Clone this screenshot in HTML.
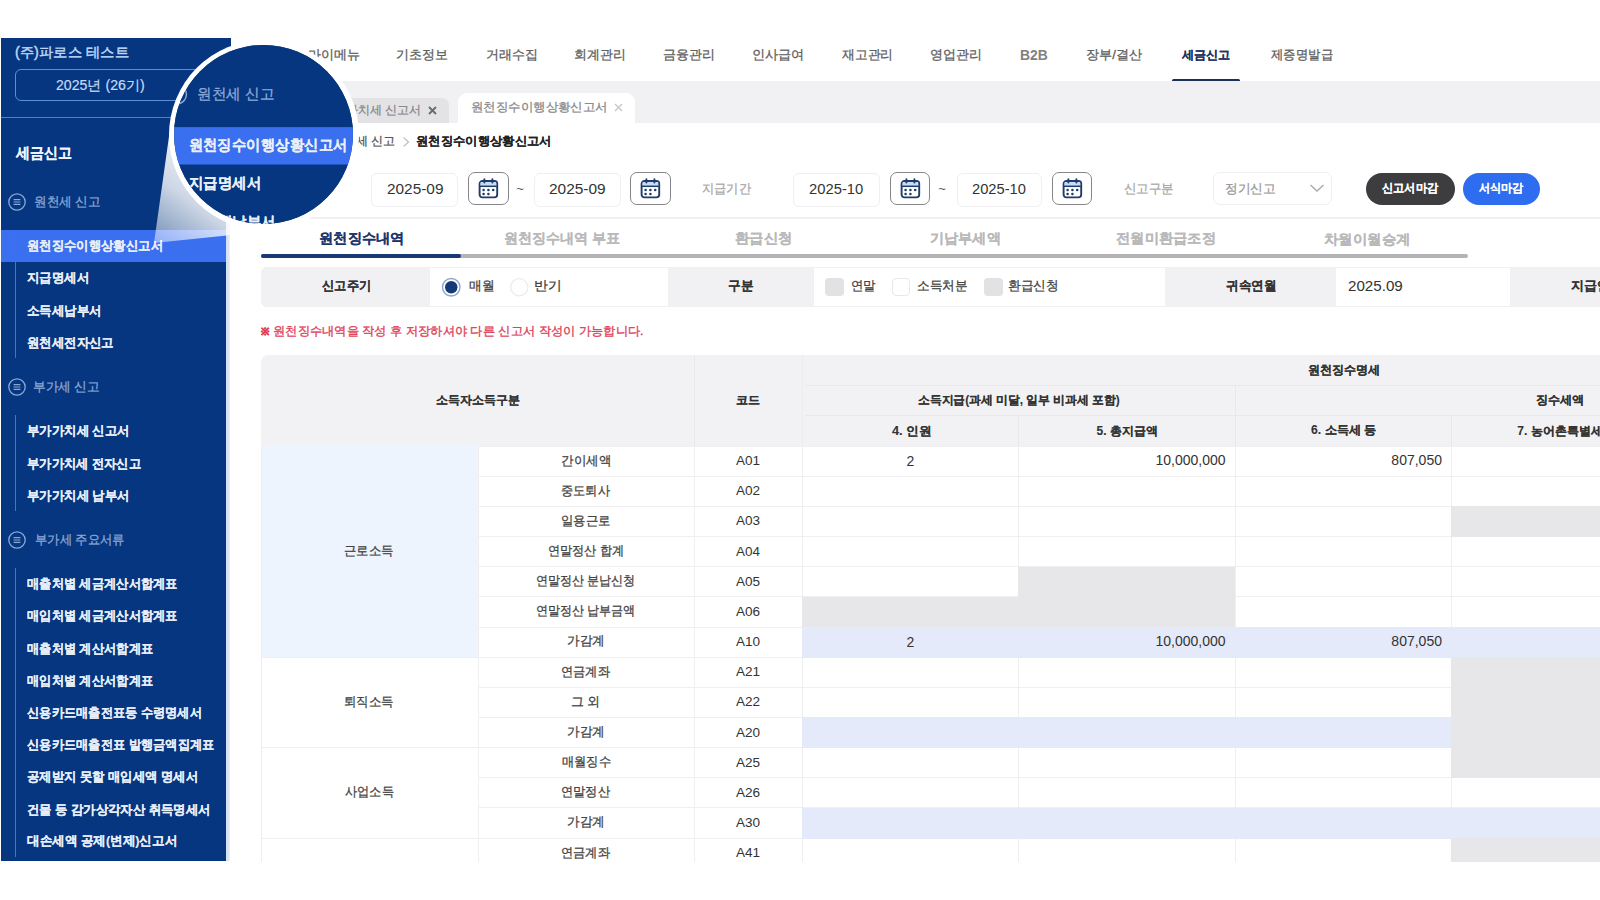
<!DOCTYPE html>
<html><head><meta charset="utf-8"><style>
html,body{margin:0;padding:0;}
body{width:1600px;height:900px;position:relative;overflow:hidden;background:#fff;font-family:"Liberation Sans",sans-serif;}
.t{position:absolute;white-space:nowrap;}
.r{position:absolute;}
</style></head><body>
<div class="t" style="left:307.72px;top:35.40px;font-size:13.000px;line-height:40px;color:#606060;-webkit-text-stroke-width:0.3px;">마이메뉴</div>
<div class="t" style="left:396.32px;top:35.26px;font-size:13.000px;line-height:40px;color:#606060;transform:scaleX(0.9966);transform-origin:0 0;-webkit-text-stroke-width:0.3px;">기초정보</div>
<div class="t" style="left:485.54px;top:35.26px;font-size:13.000px;line-height:40px;color:#606060;transform:scaleX(0.9972);transform-origin:0 0;-webkit-text-stroke-width:0.3px;">거래수집</div>
<div class="t" style="left:574.40px;top:35.39px;font-size:13.000px;line-height:40px;color:#606060;transform:scaleX(0.9920);transform-origin:0 0;-webkit-text-stroke-width:0.3px;">회계관리</div>
<div class="t" style="left:663.48px;top:35.27px;font-size:13.000px;line-height:40px;color:#606060;-webkit-text-stroke-width:0.3px;">금융관리</div>
<div class="t" style="left:752.05px;top:35.29px;font-size:13.000px;line-height:40px;color:#606060;transform:scaleX(1.0113);transform-origin:0 0;-webkit-text-stroke-width:0.3px;">인사급여</div>
<div class="t" style="left:841.88px;top:35.39px;font-size:13.000px;line-height:40px;color:#606060;transform:scaleX(0.9863);transform-origin:0 0;-webkit-text-stroke-width:0.3px;">재고관리</div>
<div class="t" style="left:930.08px;top:35.26px;font-size:13.000px;line-height:40px;color:#606060;-webkit-text-stroke-width:0.3px;">영업관리</div>
<div class="t" style="left:1019.72px;top:35.40px;font-size:14.000px;line-height:40px;color:#808080;font-weight:bold;transform:scaleX(0.9915);transform-origin:0 0;">B2B</div>
<div class="t" style="left:1085.99px;top:35.27px;font-size:13.000px;line-height:40px;color:#606060;transform:scaleX(1.0085);transform-origin:0 0;-webkit-text-stroke-width:0.3px;">장부/결산</div>
<div class="t" style="left:1182.36px;top:35.01px;font-size:12.000px;line-height:40px;color:#1b3160;font-weight:bold;transform:scaleX(1.0090);transform-origin:0 0;-webkit-text-stroke-width:0.1px;">세금신고</div>
<div class="t" style="left:1270.70px;top:35.27px;font-size:13.000px;line-height:40px;color:#606060;transform:scaleX(0.9526);transform-origin:0 0;-webkit-text-stroke-width:0.3px;">제증명발급</div>
<div class="r" style="left:1172.2px;top:79px;width:68px;height:3px;background:#1a2f5a;border-radius:2px;"></div>
<div class="r" style="left:230px;top:81.3px;width:1370px;height:41.5px;background:#f1f1f3;"></div>
<div class="r" style="left:300px;top:98px;width:148.5px;height:25px;background:#e3e3e6;border-radius:7px 7px 0 0;"></div>
<div class="t" style="left:321.75px;top:89.85px;font-size:12.000px;line-height:40px;color:#8a8a8a;-webkit-text-stroke-width:0.3px;">부가가치세 신고서</div>
<svg class="r" style="left:428px;top:106px" width="9" height="9" viewBox="0 0 9 9"><path d="M1 1l7 7M8 1l-7 7" stroke="#6a6a6a" stroke-width="1.8"/></svg>
<div class="r" style="left:457.5px;top:92.5px;width:177.5px;height:30.5px;background:#fff;border-radius:9px 9px 0 0;"></div>
<div class="t" style="left:471.06px;top:87.01px;font-size:12.000px;line-height:40px;color:#8a8a8a;transform:scaleX(1.0360);transform-origin:0 0;-webkit-text-stroke-width:0.3px;">원천징수이행상황신고서</div>
<svg class="r" style="left:614px;top:103px" width="9" height="9" viewBox="0 0 9 9"><path d="M1 1l7 7M8 1l-7 7" stroke="#c8c8c8" stroke-width="1.4"/></svg>
<div class="t" style="left:332.12px;top:121.03px;font-size:12.000px;line-height:40px;color:#555;-webkit-text-stroke-width:0.3px;">원천세 신고</div>
<svg class="r" style="left:401.5px;top:135.5px" width="8" height="12" viewBox="0 0 8 12"><path d="M1.5 1.5l5 4.5-5 4.5" fill="none" stroke="#bdbdbd" stroke-width="1.1"/></svg>
<div class="t" style="left:415.58px;top:120.93px;font-size:12.000px;line-height:40px;color:#222;font-weight:bold;transform:scaleX(1.0272);transform-origin:0 0;-webkit-text-stroke-width:0.1px;">원천징수이행상황신고서</div>
<div class="r" style="left:370.7px;top:172.5px;width:87px;height:34.5px;border:1px solid #efeff1;border-radius:6px;box-sizing:border-box"></div><div class="t" style="left:386.84px;top:168.70px;font-size:15.000px;line-height:40px;color:#333;transform:scaleX(1.0261);transform-origin:0 0;">2025-09</div>
<div class="r" style="left:468px;top:172px;width:40.5px;height:32.5px;border:1.2px solid #86868a;border-radius:7px;box-sizing:border-box;background:#fff"></div><svg class="r" style="left:478px;top:177.5px" width="21" height="21" viewBox="0 0 21 21"><rect x="1.6" y="3" width="17.6" height="16.4" rx="2.8" fill="#fff" stroke="#1f3c6b" stroke-width="1.9"/><rect x="2.6" y="4" width="15.6" height="4" fill="#c9dcf6"/><path d="M2 8.3h16.8" stroke="#1f3c6b" stroke-width="1.5"/><path d="M6.4 1.3v3.2M14.4 1.3v3.2" stroke="#1f3c6b" stroke-width="1.9" stroke-linecap="round"/><circle cx="5.6" cy="12" r="1.3" fill="#1f3c6b"/><circle cx="10.4" cy="12" r="1.3" fill="#1f3c6b"/><circle cx="15.2" cy="12" r="1.3" fill="#1f3c6b"/><circle cx="5.6" cy="16" r="1.3" fill="#1f3c6b"/><circle cx="10.4" cy="16" r="1.3" fill="#1f3c6b"/></svg>
<div class="t" style="left:516.17px;top:169.47px;font-size:13.000px;line-height:40px;color:#555;">~</div>
<div class="r" style="left:533.8px;top:172.5px;width:87px;height:34.5px;border:1px solid #efeff1;border-radius:6px;box-sizing:border-box"></div><div class="t" style="left:549.23px;top:168.70px;font-size:15.000px;line-height:40px;color:#333;transform:scaleX(1.0298);transform-origin:0 0;">2025-09 </div>
<div class="r" style="left:630.3px;top:172px;width:40.5px;height:32.5px;border:1.2px solid #86868a;border-radius:7px;box-sizing:border-box;background:#fff"></div><svg class="r" style="left:640.3px;top:177.5px" width="21" height="21" viewBox="0 0 21 21"><rect x="1.6" y="3" width="17.6" height="16.4" rx="2.8" fill="#fff" stroke="#1f3c6b" stroke-width="1.9"/><rect x="2.6" y="4" width="15.6" height="4" fill="#c9dcf6"/><path d="M2 8.3h16.8" stroke="#1f3c6b" stroke-width="1.5"/><path d="M6.4 1.3v3.2M14.4 1.3v3.2" stroke="#1f3c6b" stroke-width="1.9" stroke-linecap="round"/><circle cx="5.6" cy="12" r="1.3" fill="#1f3c6b"/><circle cx="10.4" cy="12" r="1.3" fill="#1f3c6b"/><circle cx="15.2" cy="12" r="1.3" fill="#1f3c6b"/><circle cx="5.6" cy="16" r="1.3" fill="#1f3c6b"/><circle cx="10.4" cy="16" r="1.3" fill="#1f3c6b"/></svg>
<div class="t" style="left:702.40px;top:168.89px;font-size:13.000px;line-height:40px;color:#a8a8a8;transform:scaleX(0.9407);transform-origin:0 0;-webkit-text-stroke-width:0.3px;">지급기간</div>
<div class="r" style="left:793px;top:172.5px;width:87px;height:34.5px;border:1px solid #efeff1;border-radius:6px;box-sizing:border-box"></div><div class="t" style="left:809.27px;top:168.70px;font-size:15.000px;line-height:40px;color:#333;transform:scaleX(0.9852);transform-origin:0 0;">2025-10</div>
<div class="r" style="left:889.6px;top:172px;width:40.5px;height:32.5px;border:1.2px solid #86868a;border-radius:7px;box-sizing:border-box;background:#fff"></div><svg class="r" style="left:899.6px;top:177.5px" width="21" height="21" viewBox="0 0 21 21"><rect x="1.6" y="3" width="17.6" height="16.4" rx="2.8" fill="#fff" stroke="#1f3c6b" stroke-width="1.9"/><rect x="2.6" y="4" width="15.6" height="4" fill="#c9dcf6"/><path d="M2 8.3h16.8" stroke="#1f3c6b" stroke-width="1.5"/><path d="M6.4 1.3v3.2M14.4 1.3v3.2" stroke="#1f3c6b" stroke-width="1.9" stroke-linecap="round"/><circle cx="5.6" cy="12" r="1.3" fill="#1f3c6b"/><circle cx="10.4" cy="12" r="1.3" fill="#1f3c6b"/><circle cx="15.2" cy="12" r="1.3" fill="#1f3c6b"/><circle cx="5.6" cy="16" r="1.3" fill="#1f3c6b"/><circle cx="10.4" cy="16" r="1.3" fill="#1f3c6b"/></svg>
<div class="t" style="left:938.17px;top:169.47px;font-size:13.000px;line-height:40px;color:#555;">~</div>
<div class="r" style="left:957px;top:172.5px;width:85px;height:34.5px;border:1px solid #efeff1;border-radius:6px;box-sizing:border-box"></div><div class="t" style="left:972.27px;top:168.70px;font-size:15.000px;line-height:40px;color:#333;transform:scaleX(0.9778);transform-origin:0 0;">2025-10 </div>
<div class="r" style="left:1051.6px;top:172px;width:40.5px;height:32.5px;border:1.2px solid #86868a;border-radius:7px;box-sizing:border-box;background:#fff"></div><svg class="r" style="left:1061.6px;top:177.5px" width="21" height="21" viewBox="0 0 21 21"><rect x="1.6" y="3" width="17.6" height="16.4" rx="2.8" fill="#fff" stroke="#1f3c6b" stroke-width="1.9"/><rect x="2.6" y="4" width="15.6" height="4" fill="#c9dcf6"/><path d="M2 8.3h16.8" stroke="#1f3c6b" stroke-width="1.5"/><path d="M6.4 1.3v3.2M14.4 1.3v3.2" stroke="#1f3c6b" stroke-width="1.9" stroke-linecap="round"/><circle cx="5.6" cy="12" r="1.3" fill="#1f3c6b"/><circle cx="10.4" cy="12" r="1.3" fill="#1f3c6b"/><circle cx="15.2" cy="12" r="1.3" fill="#1f3c6b"/><circle cx="5.6" cy="16" r="1.3" fill="#1f3c6b"/><circle cx="10.4" cy="16" r="1.3" fill="#1f3c6b"/></svg>
<div class="t" style="left:1123.60px;top:169.00px;font-size:13.000px;line-height:40px;color:#a8a8a8;transform:scaleX(0.9602);transform-origin:0 0;-webkit-text-stroke-width:0.3px;">신고구분</div>
<div class="r" style="left:1213px;top:172px;width:119px;height:32.5px;border:1px solid #efeff1;border-radius:7px;box-sizing:border-box"></div>
<div class="t" style="left:1224.64px;top:168.87px;font-size:13.000px;line-height:40px;color:#9a9a9a;transform:scaleX(0.9762);transform-origin:0 0;-webkit-text-stroke-width:0.3px;">정기신고</div>
<svg class="r" style="left:1309px;top:183px" width="16" height="10" viewBox="0 0 16 10"><path d="M1.5 2l6.5 6 6.5-6" fill="none" stroke="#aaa" stroke-width="1.3"/></svg>
<div class="r" style="left:1365.6px;top:172.5px;width:89px;height:32px;background:#3d3d40;border-radius:16px;"></div>
<div class="t" style="left:1382.21px;top:168.42px;font-size:12.000px;line-height:40px;color:#fff;font-weight:bold;transform:scaleX(0.9365);transform-origin:0 0;-webkit-text-stroke-width:0.1px;">신고서마감</div>
<div class="r" style="left:1462.8px;top:172.5px;width:77px;height:32px;background:#2e6cf0;border-radius:16px;"></div>
<div class="t" style="left:1479.10px;top:168.42px;font-size:12.000px;line-height:40px;color:#fff;font-weight:bold;transform:scaleX(0.9250);transform-origin:0 0;-webkit-text-stroke-width:0.1px;">서식마감</div>
<div class="r" style="left:230px;top:217.3px;width:1370px;height:1.3px;background:#efeff1;"></div>
<div class="t" style="left:318.66px;top:218.47px;font-size:14.000px;line-height:40px;color:#1b356a;font-weight:bold;transform:scaleX(1.0198);transform-origin:0 0;-webkit-text-stroke-width:0.1px;">원천징수내역</div>
<div class="t" style="left:503.68px;top:218.47px;font-size:14.000px;line-height:40px;color:#b9b9b9;font-weight:bold;transform:scaleX(1.0042);transform-origin:0 0;-webkit-text-stroke-width:0.1px;">원천징수내역 부표</div>
<div class="t" style="left:735.21px;top:218.49px;font-size:14.000px;line-height:40px;color:#b9b9b9;font-weight:bold;transform:scaleX(1.0273);transform-origin:0 0;-webkit-text-stroke-width:0.1px;">환급신청</div>
<div class="t" style="left:929.69px;top:218.43px;font-size:14.000px;line-height:40px;color:#b9b9b9;font-weight:bold;transform:scaleX(1.0108);transform-origin:0 0;-webkit-text-stroke-width:0.1px;">기납부세액</div>
<div class="t" style="left:1116.28px;top:218.49px;font-size:14.000px;line-height:40px;color:#b9b9b9;font-weight:bold;transform:scaleX(1.0199);transform-origin:0 0;-webkit-text-stroke-width:0.1px;">전월미환급조정</div>
<div class="t" style="left:1324.38px;top:218.52px;font-size:14.000px;line-height:40px;color:#b9b9b9;font-weight:bold;transform:scaleX(1.0330);transform-origin:0 0;-webkit-text-stroke-width:0.1px;">차월이월승계</div>
<div class="r" style="left:261px;top:254px;width:1207px;height:4px;background:#b3b3b5;border-radius:2px;"></div>
<div class="r" style="left:261px;top:254px;width:200px;height:4px;background:#173a74;border-radius:2px;"></div>
<div class="r" style="left:260.5px;top:266.5px;width:1340px;height:40px;border:1px solid #f0f0f2;border-radius:6px 0 0 6px;box-sizing:border-box;background:#fff"></div>
<div class="r" style="left:260.5px;top:266.5px;width:169.5px;height:40px;background:#f1f1f3;border-radius:6px 0 0 6px;"></div>
<div class="t" style="left:321.96px;top:266.30px;font-size:13.000px;line-height:40px;color:#333;font-weight:bold;transform:scaleX(0.9447);transform-origin:0 0;-webkit-text-stroke-width:0.1px;">신고주기</div>
<svg class="r" style="left:441px;top:276.5px" width="21" height="21" viewBox="0 0 21 21"><circle cx="10.25" cy="10.25" r="8.7" fill="#fff" stroke="#90a6c4" stroke-width="1.4"/><circle cx="10.25" cy="10.25" r="6.2" fill="#143a7a"/></svg>
<div class="t" style="left:468.75px;top:266.29px;font-size:13.000px;line-height:40px;color:#444;transform:scaleX(0.9796);transform-origin:0 0;-webkit-text-stroke-width:0.3px;">매월</div>
<svg class="r" style="left:508.5px;top:276.5px" width="21" height="21" viewBox="0 0 21 21"><circle cx="10.25" cy="10.25" r="8.6" fill="#fff" stroke="#ececee" stroke-width="1.3"/></svg>
<div class="t" style="left:534.27px;top:266.29px;font-size:13.000px;line-height:40px;color:#444;transform:scaleX(1.0646);transform-origin:0 0;-webkit-text-stroke-width:0.3px;">반기</div>
<div class="r" style="left:668.3px;top:266.5px;width:146.2px;height:40px;background:#f1f1f3;"></div>
<div class="t" style="left:727.89px;top:266.17px;font-size:13.000px;line-height:40px;color:#333;font-weight:bold;transform:scaleX(0.9743);transform-origin:0 0;-webkit-text-stroke-width:0.1px;">구분</div>
<div class="r" style="left:825px;top:277.5px;width:19px;height:18.5px;background:#e2e2e5;border-radius:4px;"></div>
<div class="t" style="left:850.68px;top:266.29px;font-size:13.000px;line-height:40px;color:#444;transform:scaleX(0.9518);transform-origin:0 0;-webkit-text-stroke-width:0.3px;">연말</div>
<div class="r" style="left:891.8px;top:277.5px;width:18.5px;height:18.5px;border:1px solid #e8e8ea;border-radius:4px;box-sizing:border-box"></div>
<div class="t" style="left:917.07px;top:266.22px;font-size:13.000px;line-height:40px;color:#444;transform:scaleX(0.9727);transform-origin:0 0;-webkit-text-stroke-width:0.3px;">소득처분</div>
<div class="r" style="left:984px;top:277.5px;width:18.5px;height:18.5px;background:#e2e2e5;border-radius:4px;"></div>
<div class="t" style="left:1008.31px;top:266.30px;font-size:13.000px;line-height:40px;color:#444;transform:scaleX(0.9741);transform-origin:0 0;-webkit-text-stroke-width:0.3px;">환급신청</div>
<div class="r" style="left:1165px;top:266.5px;width:171px;height:40px;background:#f1f1f3;"></div>
<div class="t" style="left:1225.99px;top:266.16px;font-size:13.000px;line-height:40px;color:#333;font-weight:bold;transform:scaleX(0.9694);transform-origin:0 0;-webkit-text-stroke-width:0.1px;">귀속연월</div>
<div class="t" style="left:1347.63px;top:266.30px;font-size:14.000px;line-height:40px;color:#333;transform:scaleX(1.0829);transform-origin:0 0;">2025.09</div>
<div class="r" style="left:1510px;top:266.5px;width:90px;height:40px;background:#f1f1f3;"></div>
<div class="t" style="left:1571.19px;top:266.15px;font-size:13.000px;line-height:40px;color:#333;font-weight:bold;-webkit-text-stroke-width:0.1px;">지급연월</div>
<div class="t" style="left:261.41px;top:312.26px;font-size:10.000px;line-height:40px;color:#df3f56;font-weight:bold;-webkit-text-stroke-width:0.6px;">※</div>
<div class="t" style="left:272.98px;top:311.31px;font-size:12.000px;line-height:40px;color:#e0425a;transform:scaleX(1.0215);transform-origin:0 0;-webkit-text-stroke-width:0.35px;">원천징수내역을 작성 후 저장하셔야 다른 신고서 작성이 가능합니다.</div>
<div class="r" style="left:0;top:0;width:1600px;height:862px;overflow:hidden"><div class="r" style="left:261px;top:355px;width:1339px;height:90.60000000000002px;background:#f2f2f4;border-radius:7px 0 0 0;"></div>
<div class="r" style="left:694.3px;top:355px;width:1px;height:90.60000000000002px;background:#e8e8ec;"></div>
<div class="r" style="left:802px;top:355px;width:1px;height:90.60000000000002px;background:#ececf0;"></div>
<div class="r" style="left:806px;top:385.3px;width:794px;height:1px;background:#e8e8ec;"></div>
<div class="r" style="left:806px;top:415px;width:794px;height:1px;background:#e8e8ec;"></div>
<div class="r" style="left:1018.3px;top:415px;width:1px;height:30.6px;background:#e8e8ec;"></div>
<div class="r" style="left:1235px;top:385.3px;width:1px;height:60.3px;background:#e8e8ec;"></div>
<div class="r" style="left:1451.4px;top:415px;width:1px;height:30.6px;background:#e8e8ec;"></div>
<div class="t" style="left:435.66px;top:380.26px;font-size:12.000px;line-height:40px;color:#333;font-weight:bold;transform:scaleX(0.9979);transform-origin:0 0;-webkit-text-stroke-width:0.1px;">소득자소득구분</div>
<div class="t" style="left:736.25px;top:380.21px;font-size:12.000px;line-height:40px;color:#333;font-weight:bold;-webkit-text-stroke-width:0.1px;">코드</div>
<div class="t" style="left:1308.09px;top:349.93px;font-size:12.000px;line-height:40px;color:#333;font-weight:bold;transform:scaleX(1.0074);transform-origin:0 0;-webkit-text-stroke-width:0.1px;">원천징수명세</div>
<div class="t" style="left:917.77px;top:379.79px;font-size:12.000px;line-height:40px;color:#333;font-weight:bold;transform:scaleX(0.9852);transform-origin:0 0;-webkit-text-stroke-width:0.1px;">소득지급(과세 미달, 일부 비과세 포함)</div>
<div class="t" style="left:1535.92px;top:380.19px;font-size:12.000px;line-height:40px;color:#333;font-weight:bold;transform:scaleX(1.0107);transform-origin:0 0;-webkit-text-stroke-width:0.1px;">징수세액</div>
<div class="t" style="left:891.72px;top:410.60px;font-size:12.000px;line-height:40px;color:#333;font-weight:bold;transform:scaleX(1.0574);transform-origin:0 0;-webkit-text-stroke-width:0.1px;">4. 인원</div>
<div class="t" style="left:1096.48px;top:410.53px;font-size:12.000px;line-height:40px;color:#333;font-weight:bold;-webkit-text-stroke-width:0.1px;">5. 총지급액</div>
<div class="t" style="left:1310.50px;top:410.49px;font-size:12.000px;line-height:40px;color:#333;font-weight:bold;transform:scaleX(1.0137);transform-origin:0 0;-webkit-text-stroke-width:0.1px;">6. 소득세 등</div>
<div class="t" style="left:1517.26px;top:410.53px;font-size:12.000px;line-height:40px;color:#333;font-weight:bold;-webkit-text-stroke-width:0.1px;">7. 농어촌특별세</div>
<div class="r" style="left:478px;top:475.75px;width:1122px;height:1px;background:#efeff2;"></div>
<div class="r" style="left:478px;top:505.90000000000003px;width:1122px;height:1px;background:#efeff2;"></div>
<div class="r" style="left:478px;top:536.05px;width:1122px;height:1px;background:#efeff2;"></div>
<div class="r" style="left:478px;top:566.2px;width:1122px;height:1px;background:#efeff2;"></div>
<div class="r" style="left:478px;top:596.35px;width:1122px;height:1px;background:#efeff2;"></div>
<div class="r" style="left:478px;top:626.5px;width:1122px;height:1px;background:#efeff2;"></div>
<div class="r" style="left:261px;top:656.65px;width:1339px;height:1px;background:#efeff2;"></div>
<div class="r" style="left:478px;top:686.8px;width:1122px;height:1px;background:#efeff2;"></div>
<div class="r" style="left:478px;top:716.95px;width:1122px;height:1px;background:#efeff2;"></div>
<div class="r" style="left:261px;top:747.1px;width:1339px;height:1px;background:#efeff2;"></div>
<div class="r" style="left:478px;top:777.25px;width:1122px;height:1px;background:#efeff2;"></div>
<div class="r" style="left:478px;top:807.4px;width:1122px;height:1px;background:#efeff2;"></div>
<div class="r" style="left:261px;top:837.55px;width:1339px;height:1px;background:#efeff2;"></div>
<div class="r" style="left:261px;top:445.6px;width:1339px;height:1px;background:#efeff2;"></div>
<div class="r" style="left:478px;top:445.6px;width:1px;height:416.4px;background:#efeff2;"></div>
<div class="r" style="left:694.3px;top:445.6px;width:1px;height:416.4px;background:#efeff2;"></div>
<div class="r" style="left:802px;top:445.6px;width:1px;height:416.4px;background:#efeff2;"></div>
<div class="r" style="left:1018.3px;top:445.6px;width:1px;height:416.4px;background:#efeff2;"></div>
<div class="r" style="left:1235px;top:445.6px;width:1px;height:416.4px;background:#efeff2;"></div>
<div class="r" style="left:1451.4px;top:445.6px;width:1px;height:416.4px;background:#efeff2;"></div>
<div class="r" style="left:1668px;top:445.6px;width:1px;height:416.4px;background:#efeff2;"></div>
<div class="r" style="left:261px;top:445.6px;width:1px;height:416.4px;background:#efeff2;"></div>
<div class="r" style="left:261.5px;top:446.1px;width:216.5px;height:211.04999999999998px;background:#edf4fd;"></div>
<div class="t" style="left:560.83px;top:440.60px;font-size:13.000px;line-height:40px;color:#444;transform:scaleX(0.9633);transform-origin:0 0;-webkit-text-stroke-width:0.3px;">간이세액</div>
<div class="t" style="left:735.96px;top:441.17px;font-size:13.000px;line-height:40px;color:#333;transform:scaleX(1.0431);transform-origin:0 0;">A01</div>
<div class="t" style="left:560.82px;top:470.69px;font-size:13.000px;line-height:40px;color:#444;transform:scaleX(0.9385);transform-origin:0 0;-webkit-text-stroke-width:0.3px;">중도퇴사</div>
<div class="t" style="left:735.96px;top:471.32px;font-size:13.000px;line-height:40px;color:#333;transform:scaleX(1.0440);transform-origin:0 0;">A02</div>
<div class="r" style="left:1451.4px;top:506.40000000000003px;width:217.0999999999999px;height:30.65px;background:#e7e7ea;"></div>
<div class="t" style="left:561.01px;top:500.85px;font-size:13.000px;line-height:40px;color:#444;transform:scaleX(0.9552);transform-origin:0 0;-webkit-text-stroke-width:0.3px;">일용근로</div>
<div class="t" style="left:735.96px;top:501.47px;font-size:13.000px;line-height:40px;color:#333;transform:scaleX(1.0433);transform-origin:0 0;">A03</div>
<div class="t" style="left:547.51px;top:531.00px;font-size:13.000px;line-height:40px;color:#444;transform:scaleX(0.9324);transform-origin:0 0;-webkit-text-stroke-width:0.3px;">연말정산 합계</div>
<div class="t" style="left:735.96px;top:531.67px;font-size:13.000px;line-height:40px;color:#333;transform:scaleX(1.0349);transform-origin:0 0;">A04</div>
<div class="r" style="left:1018.3px;top:566.7px;width:217.20000000000005px;height:30.65px;background:#e7e7ea;"></div>
<div class="t" style="left:535.52px;top:561.28px;font-size:13.000px;line-height:40px;color:#444;transform:scaleX(0.9236);transform-origin:0 0;-webkit-text-stroke-width:0.3px;">연말정산 분납신청</div>
<div class="t" style="left:735.96px;top:561.78px;font-size:13.000px;line-height:40px;color:#333;transform:scaleX(1.0433);transform-origin:0 0;">A05</div>
<div class="r" style="left:802px;top:596.85px;width:216.79999999999995px;height:30.65px;background:#e7e7ea;"></div>
<div class="r" style="left:1018.3px;top:596.85px;width:217.20000000000005px;height:30.65px;background:#e7e7ea;"></div>
<div class="t" style="left:535.52px;top:591.29px;font-size:13.000px;line-height:40px;color:#444;transform:scaleX(0.9234);transform-origin:0 0;-webkit-text-stroke-width:0.3px;">연말정산 납부금액</div>
<div class="t" style="left:735.96px;top:591.93px;font-size:13.000px;line-height:40px;color:#333;transform:scaleX(1.0444);transform-origin:0 0;">A06</div>
<div class="r" style="left:802px;top:627.0px;width:216.79999999999995px;height:30.65px;background:#e5eafb;"></div>
<div class="r" style="left:1018.3px;top:627.0px;width:217.20000000000005px;height:30.65px;background:#e5eafb;"></div>
<div class="r" style="left:1235px;top:627.0px;width:216.9000000000001px;height:30.65px;background:#e5eafb;"></div>
<div class="r" style="left:1451.4px;top:627.0px;width:217.0999999999999px;height:30.65px;background:#e5eafb;"></div>
<div class="r" style="left:1668px;top:627.0px;width:217.5px;height:30.65px;background:#e5eafb;"></div>
<div class="t" style="left:567.23px;top:621.46px;font-size:13.000px;line-height:40px;color:#444;transform:scaleX(0.9664);transform-origin:0 0;-webkit-text-stroke-width:0.3px;">가감계</div>
<div class="t" style="left:735.96px;top:622.07px;font-size:13.000px;line-height:40px;color:#333;transform:scaleX(1.0409);transform-origin:0 0;">A10</div>
<div class="r" style="left:1451.4px;top:657.15px;width:217.0999999999999px;height:30.65px;background:#e7e7ea;"></div>
<div class="t" style="left:561.00px;top:651.61px;font-size:13.000px;line-height:40px;color:#444;transform:scaleX(0.9389);transform-origin:0 0;-webkit-text-stroke-width:0.3px;">연금계좌</div>
<div class="t" style="left:735.96px;top:652.22px;font-size:13.000px;line-height:40px;color:#333;transform:scaleX(1.0431);transform-origin:0 0;">A21</div>
<div class="r" style="left:1451.4px;top:687.3px;width:217.0999999999999px;height:30.65px;background:#e7e7ea;"></div>
<div class="t" style="left:571.19px;top:681.88px;font-size:13.000px;line-height:40px;color:#444;transform:scaleX(0.9929);transform-origin:0 0;-webkit-text-stroke-width:0.3px;">그 외</div>
<div class="t" style="left:735.96px;top:682.37px;font-size:13.000px;line-height:40px;color:#333;transform:scaleX(1.0440);transform-origin:0 0;">A22</div>
<div class="r" style="left:802px;top:717.45px;width:216.79999999999995px;height:30.65px;background:#e5eafb;"></div>
<div class="r" style="left:1018.3px;top:717.45px;width:217.20000000000005px;height:30.65px;background:#e5eafb;"></div>
<div class="r" style="left:1235px;top:717.45px;width:216.9000000000001px;height:30.65px;background:#e5eafb;"></div>
<div class="r" style="left:1451.4px;top:717.45px;width:217.0999999999999px;height:30.65px;background:#e7e7ea;"></div>
<div class="t" style="left:567.23px;top:711.91px;font-size:13.000px;line-height:40px;color:#444;transform:scaleX(0.9664);transform-origin:0 0;-webkit-text-stroke-width:0.3px;">가감계</div>
<div class="t" style="left:735.96px;top:712.52px;font-size:13.000px;line-height:40px;color:#333;transform:scaleX(1.0409);transform-origin:0 0;">A20</div>
<div class="r" style="left:1451.4px;top:747.6px;width:217.0999999999999px;height:30.65px;background:#e7e7ea;"></div>
<div class="t" style="left:561.58px;top:742.05px;font-size:13.000px;line-height:40px;color:#444;transform:scaleX(0.9413);transform-origin:0 0;-webkit-text-stroke-width:0.3px;">매월징수</div>
<div class="t" style="left:735.96px;top:742.68px;font-size:13.000px;line-height:40px;color:#333;transform:scaleX(1.0433);transform-origin:0 0;">A25</div>
<div class="t" style="left:561.00px;top:772.19px;font-size:13.000px;line-height:40px;color:#444;transform:scaleX(0.9389);transform-origin:0 0;-webkit-text-stroke-width:0.3px;">연말정산</div>
<div class="t" style="left:735.96px;top:772.82px;font-size:13.000px;line-height:40px;color:#333;transform:scaleX(1.0444);transform-origin:0 0;">A26</div>
<div class="r" style="left:802px;top:807.9px;width:216.79999999999995px;height:30.65px;background:#e5eafb;"></div>
<div class="r" style="left:1018.3px;top:807.9px;width:217.20000000000005px;height:30.65px;background:#e5eafb;"></div>
<div class="r" style="left:1235px;top:807.9px;width:216.9000000000001px;height:30.65px;background:#e5eafb;"></div>
<div class="r" style="left:1451.4px;top:807.9px;width:217.0999999999999px;height:30.65px;background:#e5eafb;"></div>
<div class="r" style="left:1668px;top:807.9px;width:217.5px;height:30.65px;background:#e5eafb;"></div>
<div class="t" style="left:567.23px;top:802.36px;font-size:13.000px;line-height:40px;color:#444;transform:scaleX(0.9664);transform-origin:0 0;-webkit-text-stroke-width:0.3px;">가감계</div>
<div class="t" style="left:735.96px;top:802.97px;font-size:13.000px;line-height:40px;color:#333;transform:scaleX(1.0409);transform-origin:0 0;">A30</div>
<div class="r" style="left:1451.4px;top:838.05px;width:217.0999999999999px;height:30.65px;background:#e7e7ea;"></div>
<div class="t" style="left:561.00px;top:832.51px;font-size:13.000px;line-height:40px;color:#444;transform:scaleX(0.9389);transform-origin:0 0;-webkit-text-stroke-width:0.3px;">연금계좌</div>
<div class="t" style="left:735.96px;top:833.09px;font-size:13.000px;line-height:40px;color:#333;transform:scaleX(1.0431);transform-origin:0 0;">A41</div>
<div class="t" style="left:906.44px;top:440.65px;font-size:14.000px;line-height:40px;color:#333;">2</div>
<div class="t" style="left:1155.47px;top:439.86px;font-size:14.000px;line-height:40px;color:#333;">10,000,000</div>
<div class="t" style="left:1391.35px;top:439.90px;font-size:14.000px;line-height:40px;color:#333;">807,050</div>
<div class="t" style="left:906.44px;top:621.55px;font-size:14.000px;line-height:40px;color:#333;">2</div>
<div class="t" style="left:1155.47px;top:620.76px;font-size:14.000px;line-height:40px;color:#333;">10,000,000</div>
<div class="t" style="left:1391.35px;top:620.80px;font-size:14.000px;line-height:40px;color:#333;">807,050</div>
<div class="t" style="left:344.35px;top:530.92px;font-size:13.000px;line-height:40px;color:#444;transform:scaleX(0.9494);transform-origin:0 0;-webkit-text-stroke-width:0.3px;">근로소득</div>
<div class="t" style="left:344.10px;top:681.79px;font-size:13.000px;line-height:40px;color:#444;transform:scaleX(0.9544);transform-origin:0 0;-webkit-text-stroke-width:0.3px;">퇴직소득</div>
<div class="t" style="left:344.84px;top:772.18px;font-size:13.000px;line-height:40px;color:#444;transform:scaleX(0.9396);transform-origin:0 0;-webkit-text-stroke-width:0.3px;">사업소득</div></div>
<div class="r" style="left:1px;top:38px;width:229.5px;height:22px;background:#05367f;"></div>
<div class="r" style="left:1px;top:38px;width:225.5px;height:823px;background:#05367f;"></div>
<div class="r" style="left:226px;top:60px;width:4px;height:801px;background:linear-gradient(90deg,#cfe2fb,#dde3f2 60%,#f3f3f8);"></div>
<div class="t" style="left:15.43px;top:31.80px;font-size:14.000px;line-height:40px;color:#bcd7f8;transform:scaleX(1.0236);transform-origin:0 0;-webkit-text-stroke-width:0.45px;">(주)파로스 테스트</div>
<div class="r" style="left:15px;top:68.5px;width:197px;height:32px;border:1.3px solid #5b8fd8;border-radius:6px;box-sizing:border-box"></div>
<div class="t" style="left:56.08px;top:65.30px;font-size:14.000px;line-height:40px;color:#c2dbf9;transform:scaleX(1.0085);transform-origin:0 0;-webkit-text-stroke-width:0.2px;">2025년 (26기)</div>
<div class="r" style="left:1px;top:116.5px;width:226px;height:1.3px;background:#4f7fc4;"></div>
<div class="t" style="left:15.54px;top:133.20px;font-size:15.000px;line-height:40px;color:#f2f6fc;font-weight:bold;transform:scaleX(0.9283);transform-origin:0 0;-webkit-text-stroke-width:0.1px;">세금신고</div>
<svg class="r" style="left:7.199999999999999px;top:192px" width="20" height="20" viewBox="0 0 20 20"><circle cx="10" cy="10" r="8.2" fill="none" stroke="#8ba7d6" stroke-width="1.3"/><path d="M6.6 7.6h6.8M6.6 10h6.8M6.6 12.4h6.8" stroke="#8ba7d6" stroke-width="1.1"/></svg>
<div class="t" style="left:33.69px;top:182.00px;font-size:13.000px;line-height:40px;color:#8ba7d6;transform:scaleX(0.9683);transform-origin:0 0;-webkit-text-stroke-width:0.3px;">원천세 신고</div>
<div class="r" style="left:1px;top:230.2px;width:225px;height:32.2px;background:#3a6ff0;"></div>
<div class="t" style="left:26.74px;top:226.30px;font-size:13.000px;line-height:40px;color:#e9eff9;font-weight:bold;transform:scaleX(0.9500);transform-origin:0 0;-webkit-text-stroke-width:0.1px;">원천징수이행상황신고서</div>
<div class="t" style="left:27.11px;top:258.36px;font-size:13.000px;line-height:40px;color:#e9eff9;font-weight:bold;transform:scaleX(0.9615);transform-origin:0 0;-webkit-text-stroke-width:0.1px;">지급명세서</div>
<div class="t" style="left:27.05px;top:290.55px;font-size:13.000px;line-height:40px;color:#e9eff9;font-weight:bold;transform:scaleX(0.9584);transform-origin:0 0;-webkit-text-stroke-width:0.1px;">소득세납부서</div>
<div class="t" style="left:26.73px;top:322.95px;font-size:13.000px;line-height:40px;color:#e9eff9;font-weight:bold;transform:scaleX(0.9546);transform-origin:0 0;-webkit-text-stroke-width:0.1px;">원천세전자신고</div>
<div class="r" style="left:15px;top:230.2px;width:1px;height:127.80000000000001px;background:#4a74b8;"></div>
<svg class="r" style="left:7.199999999999999px;top:377px" width="20" height="20" viewBox="0 0 20 20"><circle cx="10" cy="10" r="8.2" fill="none" stroke="#8ba7d6" stroke-width="1.3"/><path d="M6.6 7.6h6.8M6.6 10h6.8M6.6 12.4h6.8" stroke="#8ba7d6" stroke-width="1.1"/></svg>
<div class="t" style="left:33.42px;top:367.00px;font-size:13.000px;line-height:40px;color:#8ba7d6;transform:scaleX(0.9722);transform-origin:0 0;-webkit-text-stroke-width:0.3px;">부가세 신고</div>
<div class="t" style="left:27.12px;top:411.30px;font-size:13.000px;line-height:40px;color:#e9eff9;font-weight:bold;transform:scaleX(0.9535);transform-origin:0 0;-webkit-text-stroke-width:0.1px;">부가가치세 신고서</div>
<div class="t" style="left:27.13px;top:443.50px;font-size:13.000px;line-height:40px;color:#e9eff9;font-weight:bold;transform:scaleX(0.9435);transform-origin:0 0;-webkit-text-stroke-width:0.1px;">부가가치세 전자신고</div>
<div class="t" style="left:27.12px;top:475.55px;font-size:13.000px;line-height:40px;color:#e9eff9;font-weight:bold;transform:scaleX(0.9535);transform-origin:0 0;-webkit-text-stroke-width:0.1px;">부가가치세 납부서</div>
<div class="r" style="left:15px;top:415.2px;width:1px;height:95.60000000000001px;background:#4a74b8;"></div>
<svg class="r" style="left:7.199999999999999px;top:530px" width="20" height="20" viewBox="0 0 20 20"><circle cx="10" cy="10" r="8.2" fill="none" stroke="#8ba7d6" stroke-width="1.3"/><path d="M6.6 7.6h6.8M6.6 10h6.8M6.6 12.4h6.8" stroke="#8ba7d6" stroke-width="1.1"/></svg>
<div class="t" style="left:34.65px;top:520.00px;font-size:13.000px;line-height:40px;color:#8ba7d6;transform:scaleX(0.9491);transform-origin:0 0;-webkit-text-stroke-width:0.3px;">부가세 주요서류</div>
<div class="t" style="left:27.26px;top:564.32px;font-size:13.000px;line-height:40px;color:#e9eff9;font-weight:bold;transform:scaleX(0.9440);transform-origin:0 0;-webkit-text-stroke-width:0.1px;">매출처별 세금계산서합계표</div>
<div class="t" style="left:27.26px;top:596.36px;font-size:13.000px;line-height:40px;color:#e9eff9;font-weight:bold;transform:scaleX(0.9440);transform-origin:0 0;-webkit-text-stroke-width:0.1px;">매입처별 세금계산서합계표</div>
<div class="t" style="left:27.26px;top:628.72px;font-size:13.000px;line-height:40px;color:#e9eff9;font-weight:bold;transform:scaleX(0.9435);transform-origin:0 0;-webkit-text-stroke-width:0.1px;">매출처별 계산서합계표</div>
<div class="t" style="left:27.26px;top:660.76px;font-size:13.000px;line-height:40px;color:#e9eff9;font-weight:bold;transform:scaleX(0.9435);transform-origin:0 0;-webkit-text-stroke-width:0.1px;">매입처별 계산서합계표</div>
<div class="t" style="left:27.26px;top:693.23px;font-size:13.000px;line-height:40px;color:#e9eff9;font-weight:bold;transform:scaleX(0.9426);transform-origin:0 0;-webkit-text-stroke-width:0.1px;">신용카드매출전표등 수령명세서</div>
<div class="t" style="left:27.26px;top:725.32px;font-size:13.000px;line-height:40px;color:#e9eff9;font-weight:bold;transform:scaleX(0.9434);transform-origin:0 0;-webkit-text-stroke-width:0.1px;">신용카드매출전표 발행금액집계표</div>
<div class="t" style="left:27.06px;top:757.36px;font-size:13.000px;line-height:40px;color:#e9eff9;font-weight:bold;transform:scaleX(0.9502);transform-origin:0 0;-webkit-text-stroke-width:0.1px;">공제받지 못할 매입세액 명세서</div>
<div class="t" style="left:26.50px;top:789.56px;font-size:13.000px;line-height:40px;color:#e9eff9;font-weight:bold;transform:scaleX(0.9518);transform-origin:0 0;-webkit-text-stroke-width:0.1px;">건물 등 감가상각자산 취득명세서</div>
<div class="t" style="left:27.37px;top:821.38px;font-size:13.000px;line-height:40px;color:#e9eff9;font-weight:bold;transform:scaleX(0.9675);transform-origin:0 0;-webkit-text-stroke-width:0.1px;">대손세액 공제(변제)신고서</div>
<div class="r" style="left:15px;top:568.2px;width:1px;height:288.8px;background:#4a74b8;"></div>
<svg class="r" style="left:0;top:0" width="1600" height="900"><defs><linearGradient id="cg" gradientUnits="userSpaceOnUse" x1="150" y1="240" x2="215" y2="150"><stop offset="0" stop-color="#fff" stop-opacity="0.45"/><stop offset="0.5" stop-color="#fff" stop-opacity="0.8"/><stop offset="1" stop-color="#fff" stop-opacity="0.97"/></linearGradient></defs><polygon points="172,115 154,243 227,235.5 330,200" fill="url(#cg)"/></svg>
<div class="r" style="left:168.5px;top:39.5px;width:190px;height:190px;border-radius:50%;overflow:hidden;background:#fff"><div class="r" style="left:5.5px;top:5.5px;width:179.0px;height:179.0px;border-radius:50%;overflow:hidden;background:#05367f"><div class="r" style="left:-17.0px;top:-187.0px;width:1600px;height:900px;transform:scale(1.17);transform-origin:0 0"><div class="r" style="left:1px;top:38px;width:229.5px;height:22px;background:#05367f;"></div>
<div class="r" style="left:1px;top:38px;width:225.5px;height:823px;background:#05367f;"></div>
<div class="r" style="left:226px;top:60px;width:4px;height:801px;background:linear-gradient(90deg,#cfe2fb,#dde3f2 60%,#f3f3f8);"></div>
<div class="t" style="left:15.43px;top:31.80px;font-size:14.000px;line-height:40px;color:#bcd7f8;transform:scaleX(1.0236);transform-origin:0 0;-webkit-text-stroke-width:0.45px;">(주)파로스 테스트</div>
<div class="r" style="left:15px;top:68.5px;width:197px;height:32px;border:1.3px solid #5b8fd8;border-radius:6px;box-sizing:border-box"></div>
<div class="t" style="left:56.08px;top:65.30px;font-size:14.000px;line-height:40px;color:#c2dbf9;transform:scaleX(1.0085);transform-origin:0 0;-webkit-text-stroke-width:0.2px;">2025년 (26기)</div>
<div class="r" style="left:1px;top:116.5px;width:226px;height:1.3px;background:#4f7fc4;"></div>
<div class="t" style="left:15.54px;top:133.20px;font-size:15.000px;line-height:40px;color:#f2f6fc;font-weight:bold;transform:scaleX(0.9283);transform-origin:0 0;-webkit-text-stroke-width:0.1px;">세금신고</div>
<svg class="r" style="left:7.199999999999999px;top:192px" width="20" height="20" viewBox="0 0 20 20"><circle cx="10" cy="10" r="8.2" fill="none" stroke="#8ba7d6" stroke-width="1.3"/><path d="M6.6 7.6h6.8M6.6 10h6.8M6.6 12.4h6.8" stroke="#8ba7d6" stroke-width="1.1"/></svg>
<div class="t" style="left:33.69px;top:182.00px;font-size:13.000px;line-height:40px;color:#8ba7d6;transform:scaleX(0.9683);transform-origin:0 0;-webkit-text-stroke-width:0.3px;">원천세 신고</div>
<div class="r" style="left:1px;top:230.2px;width:225px;height:32.2px;background:#3a6ff0;"></div>
<div class="t" style="left:26.74px;top:226.30px;font-size:13.000px;line-height:40px;color:#e9eff9;font-weight:bold;transform:scaleX(0.9500);transform-origin:0 0;-webkit-text-stroke-width:0.1px;">원천징수이행상황신고서</div>
<div class="t" style="left:27.11px;top:258.36px;font-size:13.000px;line-height:40px;color:#e9eff9;font-weight:bold;transform:scaleX(0.9615);transform-origin:0 0;-webkit-text-stroke-width:0.1px;">지급명세서</div>
<div class="t" style="left:27.05px;top:290.55px;font-size:13.000px;line-height:40px;color:#e9eff9;font-weight:bold;transform:scaleX(0.9584);transform-origin:0 0;-webkit-text-stroke-width:0.1px;">소득세납부서</div>
<div class="t" style="left:26.73px;top:322.95px;font-size:13.000px;line-height:40px;color:#e9eff9;font-weight:bold;transform:scaleX(0.9546);transform-origin:0 0;-webkit-text-stroke-width:0.1px;">원천세전자신고</div>
<div class="r" style="left:15px;top:230.2px;width:1px;height:127.80000000000001px;background:#4a74b8;"></div>
<svg class="r" style="left:7.199999999999999px;top:377px" width="20" height="20" viewBox="0 0 20 20"><circle cx="10" cy="10" r="8.2" fill="none" stroke="#8ba7d6" stroke-width="1.3"/><path d="M6.6 7.6h6.8M6.6 10h6.8M6.6 12.4h6.8" stroke="#8ba7d6" stroke-width="1.1"/></svg>
<div class="t" style="left:33.42px;top:367.00px;font-size:13.000px;line-height:40px;color:#8ba7d6;transform:scaleX(0.9722);transform-origin:0 0;-webkit-text-stroke-width:0.3px;">부가세 신고</div>
<div class="t" style="left:27.12px;top:411.30px;font-size:13.000px;line-height:40px;color:#e9eff9;font-weight:bold;transform:scaleX(0.9535);transform-origin:0 0;-webkit-text-stroke-width:0.1px;">부가가치세 신고서</div>
<div class="t" style="left:27.13px;top:443.50px;font-size:13.000px;line-height:40px;color:#e9eff9;font-weight:bold;transform:scaleX(0.9435);transform-origin:0 0;-webkit-text-stroke-width:0.1px;">부가가치세 전자신고</div>
<div class="t" style="left:27.12px;top:475.55px;font-size:13.000px;line-height:40px;color:#e9eff9;font-weight:bold;transform:scaleX(0.9535);transform-origin:0 0;-webkit-text-stroke-width:0.1px;">부가가치세 납부서</div>
<div class="r" style="left:15px;top:415.2px;width:1px;height:95.60000000000001px;background:#4a74b8;"></div>
<svg class="r" style="left:7.199999999999999px;top:530px" width="20" height="20" viewBox="0 0 20 20"><circle cx="10" cy="10" r="8.2" fill="none" stroke="#8ba7d6" stroke-width="1.3"/><path d="M6.6 7.6h6.8M6.6 10h6.8M6.6 12.4h6.8" stroke="#8ba7d6" stroke-width="1.1"/></svg>
<div class="t" style="left:34.65px;top:520.00px;font-size:13.000px;line-height:40px;color:#8ba7d6;transform:scaleX(0.9491);transform-origin:0 0;-webkit-text-stroke-width:0.3px;">부가세 주요서류</div>
<div class="t" style="left:27.26px;top:564.32px;font-size:13.000px;line-height:40px;color:#e9eff9;font-weight:bold;transform:scaleX(0.9440);transform-origin:0 0;-webkit-text-stroke-width:0.1px;">매출처별 세금계산서합계표</div>
<div class="t" style="left:27.26px;top:596.36px;font-size:13.000px;line-height:40px;color:#e9eff9;font-weight:bold;transform:scaleX(0.9440);transform-origin:0 0;-webkit-text-stroke-width:0.1px;">매입처별 세금계산서합계표</div>
<div class="t" style="left:27.26px;top:628.72px;font-size:13.000px;line-height:40px;color:#e9eff9;font-weight:bold;transform:scaleX(0.9435);transform-origin:0 0;-webkit-text-stroke-width:0.1px;">매출처별 계산서합계표</div>
<div class="t" style="left:27.26px;top:660.76px;font-size:13.000px;line-height:40px;color:#e9eff9;font-weight:bold;transform:scaleX(0.9435);transform-origin:0 0;-webkit-text-stroke-width:0.1px;">매입처별 계산서합계표</div>
<div class="t" style="left:27.26px;top:693.23px;font-size:13.000px;line-height:40px;color:#e9eff9;font-weight:bold;transform:scaleX(0.9426);transform-origin:0 0;-webkit-text-stroke-width:0.1px;">신용카드매출전표등 수령명세서</div>
<div class="t" style="left:27.26px;top:725.32px;font-size:13.000px;line-height:40px;color:#e9eff9;font-weight:bold;transform:scaleX(0.9434);transform-origin:0 0;-webkit-text-stroke-width:0.1px;">신용카드매출전표 발행금액집계표</div>
<div class="t" style="left:27.06px;top:757.36px;font-size:13.000px;line-height:40px;color:#e9eff9;font-weight:bold;transform:scaleX(0.9502);transform-origin:0 0;-webkit-text-stroke-width:0.1px;">공제받지 못할 매입세액 명세서</div>
<div class="t" style="left:26.50px;top:789.56px;font-size:13.000px;line-height:40px;color:#e9eff9;font-weight:bold;transform:scaleX(0.9518);transform-origin:0 0;-webkit-text-stroke-width:0.1px;">건물 등 감가상각자산 취득명세서</div>
<div class="t" style="left:27.37px;top:821.38px;font-size:13.000px;line-height:40px;color:#e9eff9;font-weight:bold;transform:scaleX(0.9675);transform-origin:0 0;-webkit-text-stroke-width:0.1px;">대손세액 공제(변제)신고서</div>
<div class="r" style="left:15px;top:568.2px;width:1px;height:288.8px;background:#4a74b8;"></div></div></div></div>
</body></html>
